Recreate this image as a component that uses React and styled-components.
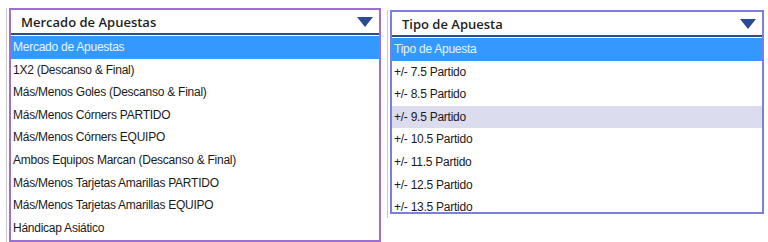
import React from "react";
import styled, { createGlobalStyle } from "styled-components";

const GlobalStyle = createGlobalStyle`
  html, body {
    margin: 0;
    padding: 0;
    background: #ffffff;
  }
  body {
    width: 768px;
    height: 242px;
    overflow: hidden;
  }
`;

const Page = styled.div`
  display: flex;
  align-items: flex-start;
  padding-left: 6px;
  gap: 6px;
`;

const Frame = styled.div`
  border-left: 1px solid #c9c9c9;
  padding-left: 2px;
  margin-top: ${(p) => p.$top}px;
  padding-bottom: ${(p) => p.$tail}px;
`;

const Box = styled.div`
  width: ${(p) => p.$width}px;
  border: 2px solid ${(p) => p.$outline};
  background: #ffffff;
  display: flex;
  flex-direction: column;
`;

const Header = styled.div`
  height: 23px;
  display: flex;
  align-items: center;
  justify-content: space-between;
  padding: 0 6px 0 10px;
  border-bottom: 2px solid #2f4b8f;
  font-family: "Open Sans", sans-serif;
  font-weight: 600;
  font-size: 13px;
  color: #1e1e1e;
`;

const List = styled.ul`
  list-style: none;
  margin: 0;
  padding: 1px 0 0;
  height: ${(p) => p.$height}px;
  overflow: hidden;
`;

const Item = styled.li`
  height: 22.6px;
  line-height: 22.6px;
  padding-left: 2px;
  font-family: "Liberation Sans", Arial, sans-serif;
  font-size: 12px;
  letter-spacing: -0.25px;
  white-space: nowrap;
  color: ${(p) => (p.$selected ? "#eaf4ff" : "#1a1a1a")};
  background: ${(p) =>
    p.$selected ? "#3399ff" : p.$hover ? "#dcdcef" : "transparent"};
`;

const Arrow = () => (
  <svg width="16" height="10" viewBox="0 0 16 10">
    <polygon points="0,0 16,0 8,10" fill="#2c4a94" />
  </svg>
);

const Dropdown = ({ title, options, width, outline, top, tail, listHeight, hover }) => (
  <Frame $top={top} $tail={tail}>
    <Box $width={width} $outline={outline}>
      <Header>
        <span>{title}</span>
        <Arrow />
      </Header>
      <List $height={listHeight}>
        {options.map((o, i) => (
          <Item key={o} $selected={i === 0} $hover={i === hover}>
            {o}
          </Item>
        ))}
      </List>
    </Box>
  </Frame>
);

const mercados = [
  "Mercado de Apuestas",
  "1X2 (Descanso & Final)",
  "Más/Menos Goles (Descanso & Final)",
  "Más/Menos Córners PARTIDO",
  "Más/Menos Córners EQUIPO",
  "Ambos Equipos Marcan (Descanso & Final)",
  "Más/Menos Tarjetas Amarillas PARTIDO",
  "Más/Menos Tarjetas Amarillas EQUIPO",
  "Hándicap Asiático",
];

const tipos = [
  "Tipo de Apuesta",
  "+/- 7.5 Partido",
  "+/- 8.5 Partido",
  "+/- 9.5 Partido",
  "+/- 10.5 Partido",
  "+/- 11.5 Partido",
  "+/- 12.5 Partido",
  "+/- 13.5 Partido",
];

export default function App() {
  return (
    <>
      <GlobalStyle />
      <Page>
        <Dropdown
          title="Mercado de Apuestas"
          options={mercados}
          width={368}
          outline="#9b70d0"
          top={8}
          tail={0}
          listHeight={204}
        />
        <Dropdown
          title="Tipo de Apuesta"
          options={tipos}
          width={370}
          outline="#7b7fe2"
          top={10}
          tail={4}
          listHeight={174}
          hover={3}
        />
      </Page>
    </>
  );
}
